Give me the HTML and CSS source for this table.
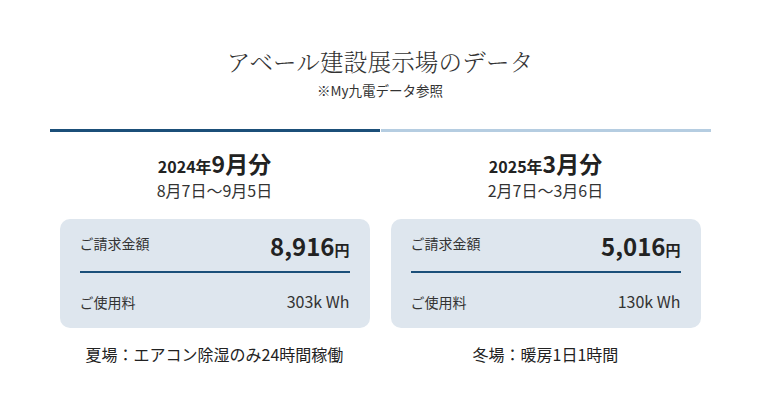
FILE: index.html
```html
<!DOCTYPE html>
<html lang="ja">
<head>
<meta charset="utf-8">
<link rel="stylesheet" href="styles.css">
</head>
<body>
<div class="page">
  <header class="head">
    <h1 class="title">アベール建設展示場のデータ</h1>
    <p class="sub">※My九電データ参照</p>
  </header>
  <div class="cols">
    <section class="col col-dark">
      <div class="bar"></div>
      <h2 class="month"><span class="yr">2024年</span><span class="mo">9月分</span></h2>
      <p class="range">8月7日～9月5日</p>
      <div class="card">
        <div class="row row-main">
          <span class="lbl">ご請求金額</span>
          <span class="amt">8,916<span class="yen">円</span></span>
        </div>
        <div class="row row-use">
          <span class="lbl">ご使用料</span>
          <span class="use">303k Wh</span>
        </div>
      </div>
      <p class="note">夏場：エアコン除湿のみ24時間稼働</p>
    </section>
    <section class="col col-light">
      <div class="bar"></div>
      <h2 class="month"><span class="yr">2025年</span><span class="mo">3月分</span></h2>
      <p class="range">2月7日～3月6日</p>
      <div class="card">
        <div class="row row-main">
          <span class="lbl">ご請求金額</span>
          <span class="amt">5,016<span class="yen">円</span></span>
        </div>
        <div class="row row-use">
          <span class="lbl">ご使用料</span>
          <span class="use">130k Wh</span>
        </div>
      </div>
      <p class="note">冬場：暖房1日1時間</p>
    </section>
  </div>
</div>
</body>
</html>
```

FILE: styles.css
```css
* { box-sizing: border-box; }
html, body { margin: 0; padding: 0; background: #fff; }
body {
  font-family: "Noto Sans CJK JP", "Noto Sans", sans-serif;
  color: #333;
}
.page {
  width: 661px;
  margin: 0 auto;
  padding-top: 45px;
}
.head { text-align: center; }
.title {
  margin: 0;
  font-family: "Noto Serif CJK JP", "IPAMincho", "Noto Sans CJK JP", serif;
  font-weight: 300;
  font-size: 23.5px;
  line-height: 32px;
  color: #333;
  letter-spacing: 0.2px;
}
.sub {
  margin: 4px 0 0;
  font-size: 13.5px;
  line-height: 18px;
  color: #333;
}
.cols {
  display: grid;
  grid-template-columns: 1fr 1fr;
  column-gap: 1px;
  margin-top: 30px;
}
.col { text-align: center; }
.bar { height: 3px; }
.col-dark .bar { background: #1b4f79; }
.col-light .bar { background: #b5cde1; }
.month {
  margin: 16px 0 0;
  line-height: 30px;
  font-weight: 700;
  color: #222;
}
.yr { font-size: 16px; }
.mo { font-size: 23px; }
.range {
  margin: -2px 0 0;
  font-size: 16px;
  line-height: 22px;
  color: #333;
}
.card {
  margin: 18px 10px 0;
  background: #dee6ee;
  border-radius: 10px;
  padding: 10px 20px 14px;
  text-align: left;
}
.row {
  display: flex;
  justify-content: space-between;
}
.row-main {
  align-items: flex-start;
  height: 44px;
  padding-top: 1px;
  border-bottom: 2px solid #1b4f79;
}
.row-main .lbl {
  line-height: 32px;
  margin-top: -3px;
}
.row-use {
  align-items: baseline;
  margin-top: 16px;
  line-height: 24px;
}
.lbl { font-size: 14px; color: #333; }
.amt {
  font-size: 24px;
  font-weight: 700;
  color: #222;
  line-height: 32px;
}
.yen { font-size: 15px; font-weight: 700; }
.use { font-size: 16px; color: #333; }
.note {
  margin: 14px 0 0;
  font-size: 16px;
  line-height: 24px;
  color: #222;
}
```
